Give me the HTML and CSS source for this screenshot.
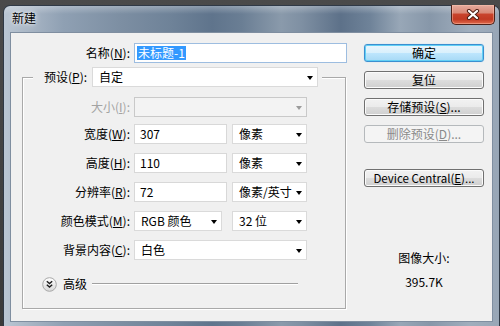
FILE: index.html
```html
<!DOCTYPE html>
<html lang="zh-CN">
<head>
<meta charset="utf-8">
<title>新建</title>
<link rel="stylesheet" href="styles.css">
</head>
<body>
<div class="window">
  <div class="titlebar">
    <span class="title">新建</span>
    <button class="close" aria-label="关闭">
      <svg width="14" height="11" viewBox="0 0 14 11">
        <path d="M3 2 L11 9 M11 2 L3 9" stroke="#4a1c12" stroke-width="4.2" stroke-linecap="round"/>
        <path d="M3 2 L11 9 M11 2 L3 9" stroke="#fff" stroke-width="2.3" stroke-linecap="round"/>
      </svg>
    </button>
  </div>
  <div class="client">
    <div class="left">
      <div class="name-row">
        <span class="name-lbl">名称(<u>N</u>):</span>
        <div class="input name-input"><span class="sel">未标题-1</span></div>
      </div>
      <fieldset class="group">
        <legend class="preset">
          <span class="preset-lbl">预设(<u>P</u>):</span>
          <div class="select preset-sel"><span>自定</span><i class="arrow"></i></div>
        </legend>
        <div class="row first disabled">
          <span class="lbl">大小(<u>I</u>):</span>
          <div class="select w173 dis"><span></span><i class="arrow"></i></div>
        </div>
        <div class="row">
          <span class="lbl">宽度(<u>W</u>):</span>
          <div class="input w93">307</div>
          <div class="select w75 gap5"><span>像素</span><i class="arrow"></i></div>
        </div>
        <div class="row">
          <span class="lbl">高度(<u>H</u>):</span>
          <div class="input w93">110</div>
          <div class="select w75 gap5"><span>像素</span><i class="arrow"></i></div>
        </div>
        <div class="row">
          <span class="lbl">分辨率(<u>R</u>):</span>
          <div class="input w93">72</div>
          <div class="select w75 gap5"><span>像素/英寸</span><i class="arrow"></i></div>
        </div>
        <div class="row">
          <span class="lbl">颜色模式(<u>M</u>):</span>
          <div class="select w88"><span>RGB 颜色</span><i class="arrow"></i></div>
          <div class="select w75 gap10"><span>32 位</span><i class="arrow"></i></div>
        </div>
        <div class="row">
          <span class="lbl">背景内容(<u>C</u>):</span>
          <div class="select w173"><span>白色</span><i class="arrow"></i></div>
        </div>
        <div class="advanced">
          <svg class="adv-icon" width="15" height="15" viewBox="0 0 15 15">
            <defs>
              <linearGradient id="advg" x1="0" y1="0" x2="0" y2="1">
                <stop offset="0" stop-color="#ffffff"/>
                <stop offset="1" stop-color="#d8d8d8"/>
              </linearGradient>
            </defs>
            <circle cx="7.5" cy="7.5" r="6.8" fill="url(#advg)" stroke="#a8a8a8" stroke-width="1"/>
            <path d="M4.8 4.3 L7.5 6.6 L10.2 4.3 M4.8 7.8 L7.5 10.1 L10.2 7.8" fill="none" stroke="#1e1e1e" stroke-width="1.4"/>
          </svg>
          <span class="adv-text">高级</span>
          <span class="adv-line"></span>
        </div>
      </fieldset>
    </div>
    <div class="right">
      <button class="btn default">确定</button>
      <button class="btn">复位</button>
      <button class="btn">存储预设(<u>S</u>)...</button>
      <button class="btn disabled-btn">删除预设(<u>D</u>)...</button>
      <button class="btn device">Device Central(<u>E</u>)...</button>
      <div class="imgsize">
        <div>图像大小:</div>
        <div class="imgsize-val">395.7K</div>
      </div>
    </div>
  </div>
</div>
</body>
</html>
```

FILE: styles.css
```css
* { box-sizing: border-box; }
html, body { margin: 0; height: 100%; }
body {
  background: linear-gradient(180deg, #4a4a4a 0, #3a3a3a 100%);
  overflow: hidden;
  font-family: "Noto Sans CJK SC", "Noto Sans", sans-serif;
  font-size: 12px;
  color: #000;
}
u { text-underline-offset: 1px; }

.window {
  margin: 5px 0 0 3px;
  width: 497px;
  height: 321px;
  padding: 0 6px 4px 6px;
  border: 1px solid #2f3946;
  border-bottom: none;
  border-radius: 7px 7px 0 0;
  display: flex;
  flex-direction: column;
  background:
    linear-gradient(180deg, rgba(255,255,255,0.28) 0, rgba(255,255,255,0) 8px),
    linear-gradient(90deg, #bac6d3 0%, #a9b6c5 5%, #8fa0b3 12%, #7c8ea2 24%, #6e8298 34%, #5f748c 42%, #6a7e94 48%, #8a9aab 56%, #7f90a3 60%, #5d7189 68%, #6f8399 74%, #98a7b7 80%, #8797a9 86%, #a0aebd 94%, #98a6b6 100%);
}

.titlebar {
  height: 26px;
  display: flex;
  align-items: flex-start;
}
.title {
  margin: 4px 0 0 2px;
  line-height: 16px;
  font-size: 12px;
  color: #000;
  text-shadow: 0 0 6px rgba(255,255,255,0.9), 0 0 3px rgba(255,255,255,0.8);
}
.close {
  margin: -1px -2px 0 auto;
  width: 44px;
  height: 20px;
  padding: 0;
  border: 1px solid #4b2119;
  border-top: none;
  border-radius: 0 0 5px 5px;
  background: linear-gradient(180deg, #e4ab9e 0%, #d98a78 40%, #c8432c 50%, #c13a23 75%, #e06a4c 100%);
  box-shadow: inset 0 0 0 1px rgba(255,200,180,0.45);
  display: flex;
  align-items: center;
  justify-content: center;
}
.close svg { display: block; }

.client {
  flex: 1;
  background: #f0f0f0;
  border: 1px solid #7f8ea0;
  padding: 10px 0 0 11px;
  display: flex;
  align-items: flex-start;
}

.left { width: 325px; flex: none; }

.name-row {
  display: flex;
  align-items: center;
  height: 20px;
}
.name-lbl {
  width: 108px;
  margin-right: 4px;
  text-align: right;
  line-height: 16px;
  white-space: nowrap;
}
.input {
  height: 20px;
  border: 1px solid #d8d8d8;
  background: #fff;
  padding-left: 5px;
  line-height: 18px;
  white-space: nowrap;
}
.name-input {
  width: 213px;
  border-color: #9dbde0;
  padding-left: 2px;
  display: flex;
  align-items: center;
}
.sel {
  background: #3399ff;
  color: #fff;
  line-height: 14px;
  padding: 0 1px;
}

.group {
  width: 324px;
  min-width: 0;
  margin: 4px 0 0 0;
  padding: 10px 0 16px 10px;
  border: 1px solid #a9a9a9;
  box-shadow: inset 1px 1px 0 #fff, 1px 1px 0 #fff;
}
.preset {
  padding: 0 4px 0 11px;
  display: flex;
  align-items: center;
  background: #f0f0f0;
}
.preset-lbl {
  margin-right: 5px;
  line-height: 16px;
  white-space: nowrap;
}
.preset-sel { width: 226px; border-color: #b3b3b3; }

.select {
  height: 20px;
  border: 1px solid #dadada;
  background: #fff;
  padding: 0 4px 0 6px;
  display: flex;
  align-items: center;
  justify-content: space-between;
  line-height: 18px;
  white-space: nowrap;
}
.arrow {
  width: 0;
  height: 0;
  margin-top: 2px;
  border-top: 4px solid #000;
  border-left: 3.5px solid transparent;
  border-right: 3.5px solid transparent;
}
.select.dis { background: #f3f3f3; border-color: #c9c9c9; }
.select.dis .arrow { border-top-color: #9b9b9b; }

.row {
  display: flex;
  align-items: center;
  height: 20px;
  margin-top: 9px;
}
.row.first { margin-top: 0; }
.row.first + .row { margin-top: 7px; }
.lbl {
  width: 97px;
  margin-right: 4px;
  text-align: right;
  line-height: 16px;
  white-space: nowrap;
}
.row.disabled .lbl { color: #a3a3a3; }

.w173 { width: 173px; }
.w93 { width: 93px; }
.w88 { width: 88px; }
.w75 { width: 75px; }
.gap5 { margin-left: 5px; }
.gap10 { margin-left: 10px; }

.advanced {
  display: flex;
  align-items: center;
  height: 16px;
  margin-top: 16px;
}
.adv-icon { margin-left: 9px; flex: none; display: block; }
.adv-text { margin-left: 6px; line-height: 16px; }
.adv-line {
  margin-left: 5px;
  width: 206px;
  height: 2px;
  border-top: 1px solid #a0a0a0;
  border-bottom: 1px solid #fff;
}

.right {
  width: 120px;
  margin-left: 17px;
  padding-top: 1px;
  display: flex;
  flex-direction: column;
}
.btn {
  height: 18px;
  padding: 0;
  margin: 0 0 9px 0;
  font-family: "Noto Sans CJK SC", "Noto Sans", sans-serif;
  font-size: 12px;
  line-height: 16px;
  color: #000;
  border: 1px solid #707070;
  border-radius: 3px;
  background: linear-gradient(180deg, #f2f2f2 0%, #ebebeb 49%, #dddddd 50%, #cfcfcf 100%);
  box-shadow: inset 0 0 0 1px #fbfbfb;
  white-space: nowrap;
}
.btn.default {
  border-color: #3c8fd0;
  background: linear-gradient(180deg, #eaf6fd 0%, #d9f0fc 49%, #bee6fd 50%, #a7d9f5 100%);
  box-shadow: inset 0 0 0 1px #62d0f5, 0 0 1px #8ad4f5;
}
.btn.disabled-btn {
  border-color: #b5b9bc;
  background: #f4f4f4;
  box-shadow: none;
  color: #8a8a8a;
}
.btn.device { margin-top: 17px; font-size: 11.5px; }

.imgsize {
  margin-top: 54px;
  text-align: center;
  line-height: 16px;
}
.imgsize-val { margin-top: 8px; }
```
